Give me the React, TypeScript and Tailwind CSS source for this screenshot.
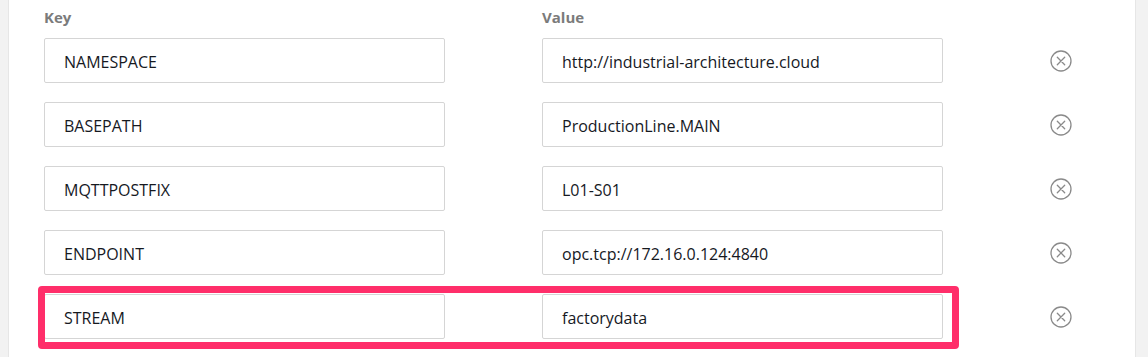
import React from "react";

const rows = [
  { key: "NAMESPACE", value: "http://industrial-architecture.cloud" },
  { key: "BASEPATH", value: "ProductionLine.MAIN" },
  { key: "MQTTPOSTFIX", value: "L01-S01" },
  { key: "ENDPOINT", value: "opc.tcp://172.16.0.124:4840" },
  { key: "STREAM", value: "factorydata", highlight: true },
];

function RemoveIcon() {
  return (
    <svg width="22" height="22" viewBox="0 0 22 22" fill="none" stroke="#8a8a8a" strokeWidth="1.3" strokeLinecap="round">
      <circle cx="11" cy="11" r="10" />
      <path d="M7.3 7.3l7.4 7.4M14.7 7.3l-7.4 7.4" />
    </svg>
  );
}

function Field({ text }: { text: string }) {
  return (
    <div className="flex h-[45px] w-[401px] items-center rounded-[2px] border border-[#d5d5d5] bg-white pl-[19px] pt-[2px] text-[16px] text-[#16191f]">
      {text}
    </div>
  );
}

export default function App() {
  return (
    <div className="flex h-[357px] w-[1148px] bg-[#f2f2f2] font-['Open_Sans',sans-serif]">
      <div className="w-[9px] border-r border-[#e6e6e6]" />
      <div className="flex-1 bg-white pl-[35px] pt-[7px]">
        <div className="mb-[11px] flex h-[20px] items-center text-[15px] font-bold text-[#7b7b7b]">
          <span className="w-[498px]">Key</span>
          <span>Value</span>
        </div>
        <div className="flex flex-col gap-[19px]">
          {rows.map((r) => (
            <div key={r.key} className="relative flex items-center">
              {r.highlight && (
                <span className="absolute left-[-6px] top-[-8px] h-[63px] w-[921px] rounded-[4px] border-[7px] border-[#ff2e6a]" />
              )}
              <Field text={r.key} />
              <div className="ml-[97px]">
                <Field text={r.value} />
              </div>
              <div className="ml-[107px] flex items-center">
                <RemoveIcon />
              </div>
            </div>
          ))}
        </div>
      </div>
      <div className="w-[13px] border-l border-[#e6e6e6]" />
    </div>
  );
}
